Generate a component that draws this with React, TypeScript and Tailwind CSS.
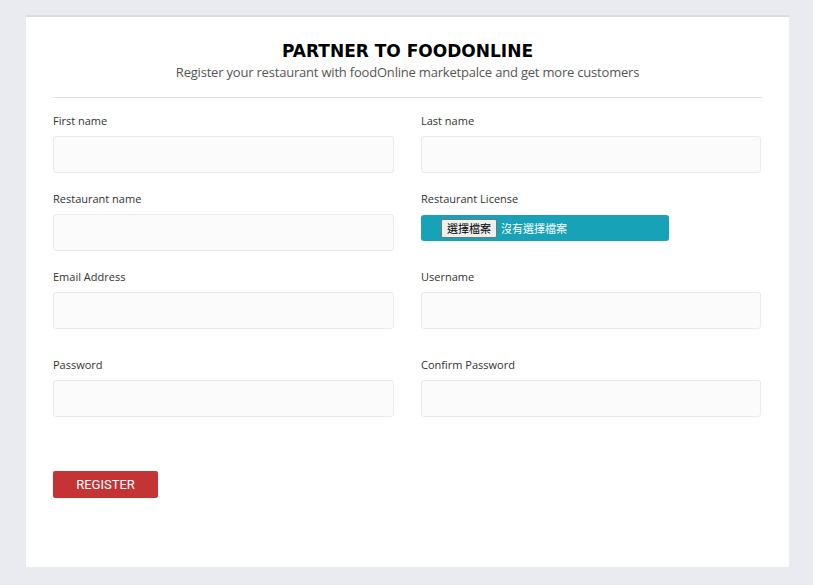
import React from "react";

const Field = ({ label, className = "" }: { label: string; className?: string }) => (
    <div className={className}>
        <label className="block h-4 text-[11px] leading-4 text-[#333] mb-[7px]">{label}</label>
        <input
            type="text"
            className="block w-full h-[37px] rounded-[3px] border border-[#e9e9ef] bg-[#fbfbfb] outline-none"
        />
    </div>
);

const App = () => {
    return (
        <div className="min-h-[585px] bg-[#eaebf0] pt-[15px] pb-[18px] pl-[26px] pr-[24px] font-['Open_Sans',sans-serif]">
            <div className="w-[763px] h-[552px] bg-white border-t-2 border-[#dcdcdc] px-[27px] pt-[23px]">
                <div className="text-center">
                    <h1 className="text-[17px] leading-[22px] font-extrabold text-black font-['DejaVu_Sans',sans-serif]">
                        PARTNER TO FOODONLINE
                    </h1>
                    <p className="text-[13px] leading-5 tracking-[-0.2px] text-[#555]">
                        Register your restaurant with foodOnline marketpalce and get more customers
                    </p>
                </div>
                <hr className="mt-[15px] border-0 border-t border-[#e2e2e2]" />

                <div className="grid grid-cols-[341px_340px] gap-x-[27px] mt-[15px]">
                    <Field label="First name" />
                    <Field label="Last name" />

                    <Field label="Restaurant name" className="mt-[18px]" />
                    <div className="mt-[18px]">
                        <label className="block h-4 text-[11px] leading-4 text-[#333] mb-[8px]">Restaurant License</label>
                        <div className="flex items-center w-[248px] h-[26px] rounded-[3px] bg-[#17a2b8] pl-[20px] font-['Noto_Sans_CJK_TC',sans-serif]">
                            <span className="h-[19px] px-[5px] flex items-center border border-[#767676] bg-[#efefef] text-[11px] leading-none text-black rounded-[2px]">
                                選擇檔案
                            </span>
                            <span className="ml-[4px] text-[11px] leading-none text-white">沒有選擇檔案</span>
                        </div>
                    </div>

                    <Field label="Email Address" className="mt-[18px]" />
                    <Field label="Username" className="mt-[18px]" />

                    <Field label="Password" className="mt-[28px]" />
                    <Field label="Confirm Password" className="mt-[28px]" />
                </div>

                <button className="mt-[54px] w-[105px] h-[27px] rounded-[2px] bg-[#c43434] text-white text-[13px] uppercase font-['Roboto',sans-serif]">
                    Register
                </button>
            </div>
        </div>
    );
};

export default App;
